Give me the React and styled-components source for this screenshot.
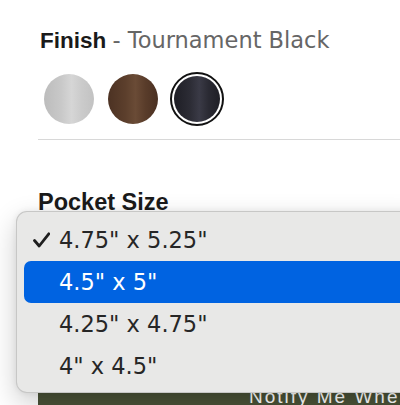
import React from "react";
import styled, { createGlobalStyle } from "styled-components";

const GlobalStyle = createGlobalStyle`
  html, body {
    margin: 0;
    padding: 0;
    background: #ffffff;
    overflow: hidden;
  }
  * { box-sizing: border-box; }
`;

const Page = styled.div`
  position: relative;
  width: 400px;
  height: 405px;
  overflow: hidden;
  padding: 27px 0 0 38px;
  font-family: "Liberation Sans", Arial, sans-serif;
  color: #1a1a1a;
`;

const Heading = styled.h2`
  margin: 0;
  padding-left: ${(p) => p.$indent || 0}px;
  font-family: "Liberation Sans", Arial, sans-serif;
  font-weight: 700;
  font-size: ${(p) => p.$size}px;
  line-height: 26px;
  color: #1a1a1a;
  white-space: nowrap;
`;

const HeadingValue = styled.span`
  font-family: "DejaVu Sans", sans-serif;
  font-weight: 400;
  font-size: 22.5px;
  color: #666666;
`;

const SwatchRow = styled.div`
  display: flex;
  gap: 10px;
  margin: 18px 0 0 4px;
`;

const SwatchRing = styled.div`
  width: 54px;
  height: 54px;
  border-radius: 50%;
  border: 2px solid ${(p) => (p.$selected ? "#111111" : "transparent")};
  padding: ${(p) => (p.$selected ? 2 : 0)}px;
  background: #ffffff;
`;

const SwatchDot = styled.div`
  width: 100%;
  height: 100%;
  border-radius: 50%;
  background: ${(p) => p.$fill};
`;

const Divider = styled.hr`
  margin: 13px 0 0 0;
  border: 0;
  height: 1px;
  background: #d8d8d8;
`;

const SizeSection = styled.div`
  margin-top: 49px;
`;

const SelectBox = styled.div`
  margin-top: 12px;
  height: 46px;
  border: 1px solid #bbbbbb;
  border-radius: 4px;
  width: 400px;
`;

const NotifyButton = styled.button`
  display: flex;
  align-items: center;
  justify-content: center;
  margin-top: 96px;
  width: 686px;
  height: 56px;
  border: 0;
  background: #4a5237;
  color: #ffffff;
  font-family: "Liberation Sans", Arial, sans-serif;
  font-size: 19px;
  letter-spacing: 2px;
  white-space: nowrap;
`;

const Popup = styled.div`
  position: absolute;
  left: 16px;
  top: 211px;
  width: 420px;
  height: 182px;
  padding: 7px 7px 5px 7px;
  background: #e8e8e7;
  border: 1px solid rgba(0, 0, 0, 0.14);
  border-radius: 11px;
  box-shadow: 0 10px 28px rgba(0, 0, 0, 0.2), 0 0 6px rgba(0, 0, 0, 0.07);
  display: flex;
  flex-direction: column;
`;

const Option = styled.div`
  display: flex;
  align-items: center;
  height: 42px;
  padding-left: 9px;
  border-radius: 7px;
  background: ${(p) => (p.$active ? "#0063e1" : "transparent")};
  color: ${(p) => (p.$active ? "#ffffff" : "#262626")};
  font-family: "DejaVu Sans", sans-serif;
  font-size: 22.5px;
  white-space: nowrap;
`;

const CheckCol = styled.span`
  display: flex;
  align-items: center;
  width: 26px;
  height: 100%;
`;

const options = [`4.75" x 5.25"`, `4.5" x 5"`, `4.25" x 4.75"`, `4" x 4.5"`];

const swatches = [
  { fill: "linear-gradient(90deg, #bcbcbc 0%, #c9c9c9 35%, #d6d6d6 55%, #cbcbcb 75%, #c2c2c2 100%)" },
  { fill: "linear-gradient(90deg, #4c3223 0%, #5c3f2c 35%, #6a4b36 55%, #593c2a 75%, #4a3022 100%)" },
  { fill: "linear-gradient(90deg, #1e1e25 0%, #2c2c35 35%, #3a3a46 55%, #2a2a33 75%, #1f1f26 100%)", selected: true },
];

function Check() {
  return (
    <svg width="17" height="16" viewBox="0 0 17 16">
      <path d="M1.5 8.5 L6.2 14 L15.8 1.8" fill="none" stroke="#1f1f1f" strokeWidth="2.8" strokeLinecap="round" strokeLinejoin="round" />
    </svg>
  );
}

export default function App() {
  return (
    <>
      <GlobalStyle />
      <Page>
        <Heading $size={22.5} $indent={2}>
          Finish <HeadingValue>- Tournament Black</HeadingValue>
        </Heading>
        <SwatchRow>
          {swatches.map((s, i) => (
            <SwatchRing key={i} $selected={s.selected}>
              <SwatchDot $fill={s.fill} />
            </SwatchRing>
          ))}
        </SwatchRow>
        <Divider />
        <SizeSection>
          <Heading $size={23.5}>Pocket Size</Heading>
          <SelectBox />
        </SizeSection>
        <NotifyButton>Notify Me When Available</NotifyButton>
        <Popup>
          {options.map((o, i) => (
            <Option key={o} $active={i === 1}>
              <CheckCol>{i === 0 && <Check />}</CheckCol>
              {o}
            </Option>
          ))}
        </Popup>
      </Page>
    </>
  );
}
